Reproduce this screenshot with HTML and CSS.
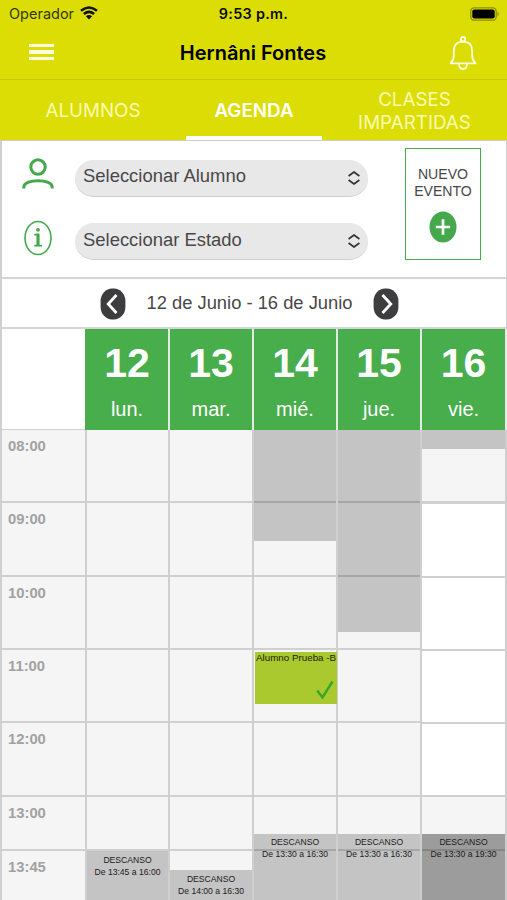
FILE: index.html
```html
<!DOCTYPE html>
<html lang="es">
<head>
<meta charset="utf-8">
<title>Agenda</title>
<link rel="stylesheet" href="styles.css">
</head>
<body>
<div class="app">
  <header class="top">
    <div class="status">
      <div class="carrier"><span class="operator">Operador</span>
        <svg class="wifi" viewBox="0 0 18 14" width="18" height="14" fill="none" stroke="#111" stroke-width="2.5"><path d="M1 4.8Q9-1.8 17 4.8M3.9 8Q9 3.8 14.1 8"/><path d="M9 13.5L5.9 10.2Q9 7.8 12.1 10.2Z" fill="#111" stroke="none"/></svg>
      </div>
      <span class="clock">9:53 p.m.</span>
      <svg class="battery" viewBox="0 0 30 14" width="30" height="14"><rect x=".8" y=".8" width="25.4" height="12.4" rx="3.5" fill="none" stroke="#8d8d05" stroke-width="1.3"/><rect x="2.3" y="2.4" width="22.4" height="9.2" rx="2" fill="#000"/><path d="M27.5 4.5Q30 7 27.5 9.5Z" fill="#8d8d05"/></svg>
    </div>
    <div class="titlebar">
      <div class="menu"><i></i><i></i><i></i></div>
      <h1>Hernâni Fontes</h1>
      <svg class="bell" viewBox="0 0 28 34" width="28" height="34" fill="none" stroke="#fffde0" stroke-width="1.8" stroke-linejoin="round"><circle cx="14" cy="3.2" r="2.2"/><path d="M1.5 27.3Q4.8 24 4.8 20V15Q4.8 5.7 14 5.7T23.2 15V20Q23.2 24 26.5 27.3Z"/><path d="M10 27.5Q10 33 14 33T18 27.5"/></svg>
    </div>
  </header>
  <nav class="tabs">
    <div class="tab">ALUMNOS</div>
    <div class="tab active">AGENDA</div>
    <div class="tab">CLASES<br>IMPARTIDAS</div>
  </nav>
  <main>
    <section class="filters">
      <div class="fields">
        <div class="field">
          <svg viewBox="0 0 32 32" width="32" height="32" fill="none" stroke="#45a94c" stroke-width="3"><circle cx="16" cy="9" r="7.2"/><path d="M1.8 30.5V29C2.5 20.5 29.5 20.5 30.2 29V30.5"/></svg>
          <div class="select"><span>Seleccionar Alumno</span><svg viewBox="0 0 12 14" width="12" height="14" fill="none" stroke="#333" stroke-width="1.7"><path d="M.6 5L6 1L11.4 5M.6 9L6 13L11.4 9"/></svg></div>
        </div>
        <div class="field">
          <svg viewBox="0 0 32 36" width="32" height="36" fill="none" stroke="#45a94c"><ellipse cx="16" cy="18" rx="13" ry="16.5" stroke-width="1.6"/><circle cx="16" cy="9.8" r="1.9" fill="#45a94c" stroke="none"/><path d="M12.3 14.6H17" stroke-width="1.8"/><path d="M16 13.7V25.3" stroke-width="3.2"/><path d="M12.2 25.7H20" stroke-width="1.7"/></svg>
          <div class="select"><span>Seleccionar Estado</span><svg viewBox="0 0 12 14" width="12" height="14" fill="none" stroke="#333" stroke-width="1.7"><path d="M.6 5L6 1L11.4 5M.6 9L6 13L11.4 9"/></svg></div>
        </div>
      </div>
      <div class="new-event">
        <span>NUEVO<br>EVENTO</span>
        <svg viewBox="0 0 28 32" width="28" height="32"><ellipse cx="14" cy="16" rx="13.5" ry="15.5" fill="#45a94c"/><path d="M6.8 16H21.2M14 8.3V23.7" stroke="#fff" stroke-width="2.7"/></svg>
      </div>
    </section>
    <section class="week">
      <svg viewBox="0 0 26 32" width="26" height="32"><rect x=".6" y=".5" width="24.8" height="31" rx="11.5" ry="12.5" fill="#3d3d3f"/><path d="M16.5 7L8.2 16L16.5 25" fill="none" stroke="#fff" stroke-width="2.8"/></svg>
      <span>12 de Junio - 16 de Junio</span>
      <svg viewBox="0 0 26 32" width="26" height="32"><rect x=".6" y=".5" width="24.8" height="31" rx="11.5" ry="12.5" fill="#3d3d3f"/><path d="M9.5 7L17.8 16L9.5 25" fill="none" stroke="#fff" stroke-width="2.8"/></svg>
    </section>
    <section class="calendar">
      <div class="corner"></div>
      <div class="day first"><b>12</b><span>lun.</span></div>
      <div class="day"><b>13</b><span>mar.</span></div>
      <div class="day"><b>14</b><span>mié.</span></div>
      <div class="day"><b>15</b><span>jue.</span></div>
      <div class="day"><b>16</b><span>vie.</span></div>

      <div class="col times"><div class="cell">08:00</div><div class="cell">09:00</div><div class="cell">10:00</div><div class="cell">11:00</div><div class="cell">12:00</div><div class="cell short">13:00</div><div class="cell">13:45</div></div>
      <div class="col"><div class="cell"></div><div class="cell"></div><div class="cell"></div><div class="cell"></div><div class="cell"></div><div class="cell short"></div><div class="cell"></div>
        <div class="block rest mon">DESCANSO<br>De 13:45 a 16:00</div></div>
      <div class="col"><div class="cell"></div><div class="cell"></div><div class="cell"></div><div class="cell"></div><div class="cell"></div><div class="cell short"></div><div class="cell"></div>
        <div class="block rest tue">DESCANSO<br>De 14:00 a 16:30</div></div>
      <div class="col"><div class="cell"></div><div class="cell"></div><div class="cell"></div><div class="cell"></div><div class="cell"></div><div class="cell short"></div><div class="cell"></div>
        <div class="block closed wed-am"></div>
        <div class="lesson"><span>Alumno Prueba -B</span><svg viewBox="0 0 18 20" width="18" height="20" fill="none" stroke="#36a62d" stroke-width="2.4"><path d="M1.2 10.5L6.5 17.5L16.5 1.5"/></svg></div>
        <div class="block rest">DESCANSO<br>De 13:30 a 16:30</div></div>
      <div class="col"><div class="cell"></div><div class="cell"></div><div class="cell"></div><div class="cell"></div><div class="cell"></div><div class="cell short"></div><div class="cell"></div>
        <div class="block closed thu-am"></div>
        <div class="block rest">DESCANSO<br>De 13:30 a 16:30</div></div>
      <div class="col friday"><div class="cell opening"></div><div class="cell free"></div><div class="cell free"></div><div class="cell free"></div><div class="cell free last"></div><div class="cell short"></div><div class="cell"></div>
        <div class="block closed fri-am"></div>
        <div class="block rest dark">DESCANSO<br>De 13:30 a 19:30</div></div>
    </section>
  </main>
</div>
</body>
</html>
```
FILE: styles.css
```css
* { box-sizing: border-box; }
body { margin: 0; background: #fff; }
svg { display: block; flex: none; }
.app { width: 507px; height: 900px; overflow: hidden; font-family: "Liberation Sans", Arial, sans-serif; color: #484848; }

.top { height: 80px; background: #dbdd05; border-bottom: 1px solid #c8ca08; font-family: Inter, sans-serif; color: #0c0c05; }
.status { height: 27px; display: grid; grid-template-columns: 1fr auto 1fr; align-items: center; padding: 0 7px 0 9px; }
.carrier { display: flex; align-items: center; gap: 6px; font-size: 14.5px; color: #35350a; }
.wifi { margin-top: -1px; }
.clock { font-size: 14.4px; font-weight: 600; letter-spacing: .3px; margin-right: 2px; }
.battery { justify-self: end; }
.titlebar { height: 52px; display: grid; grid-template-columns: 1fr auto 1fr; align-items: center; padding: 0 30px 0 29px; }
.menu { display: grid; gap: 3px; width: 25px; margin-top: -2px; }
.menu i { height: 3.4px; background: #fffde0; }
h1 { margin: -1px 0 0; font-size: 20px; line-height: 24px; font-weight: 600; color: #000; }
.bell { justify-self: end; margin-top: -1px; }

.tabs { height: 61px; display: grid; grid-template-columns: 186px 136px 185px; background: #dbdd05; border-bottom: 1px solid #cfcfc4; }
.tab { display: flex; align-items: center; justify-content: center; text-align: center; font: 18.8px/23px Inter, sans-serif; color: #fafab0; padding-top: 1px; }
.tab.active { color: #fff; font-weight: 600; border-bottom: 4px solid #fff; padding-top: 5px; }

main { border-left: 2px solid #d0d0d0; }
.filters { height: 138px; display: flex; justify-content: space-between; border-right: 1px solid #d0d0d0; border-bottom: 2px solid #d5d5d5; padding: 7px 25px 0 20px; }
.fields { display: grid; grid-template-rows: 63.5px 64px; }
.field { display: flex; align-items: center; gap: 21px; height: 60px; }
.field > svg { margin-top: -9px; }
.field + .field > svg { margin-top: -7px; }
.select { width: 293px; height: 37px; border-radius: 19px; background: #e8e8e8; border-bottom: 1px solid #cecece; display: flex; align-items: center; justify-content: space-between; padding: 0 8px; font-size: 18.45px; }
.select span { margin-top: -3px; }
.new-event { width: 76px; height: 112px; border: 1px solid #45a94c; display: flex; flex-direction: column; align-items: center; padding-top: 17px; gap: 10.5px; font-size: 14.1px; line-height: 17px; text-align: center; }
.week { height: 50px; display: flex; justify-content: center; align-items: center; gap: 20.5px; border-bottom: 2px solid #d5d5d5; padding: 2px 9px 0 0; font-size: 18.35px; border-right: 1px solid #d0d0d0; }
.week span { margin-top: -2px; }

.calendar { display: grid; grid-template-columns: 85px 83px 84px 84px 84px 85px; grid-template-rows: 101px 480px; }
.corner { border-bottom: 1px solid #d0d0d0; }
.day { background: #48ad4b; border-right: 2px solid #e3ece0; color: #fff; display: flex; flex-direction: column; align-items: center; }
.day.first { margin-left: -2px; padding-left: 1px; }
.day b { font-size: 41px; line-height: 46px; margin-top: 11px; }
.day span { font-size: 20px; line-height: 24px; margin-top: 11px; }
.col { position: relative; border-right: 2px solid #cfcfcf; }
.cell { height: 73.35px; background: #f5f5f5; border-bottom: 2px solid #d0d0d0; }
.cell.short { height: 54.7px; }
.times .cell { padding: 8px 0 0 6px; font-size: 14.8px; font-weight: bold; line-height: 17px; color: #a2a2a2; }
.cell.free { background: #fff; }
.cell.opening { height: 74.35px; border-bottom-width: 3px; }
.cell.free.last { height: 72.35px; }
.block { position: absolute; left: 0; right: 0; background: rgba(0, 0, 0, .2); }
.closed { top: 0; }
.wed-am { height: 111px; }
.thu-am { height: 202px; }
.fri-am { height: 19px; }
.rest { top: 404px; bottom: 0; padding-top: 2px; text-align: center; font-size: 8.6px; line-height: 12px; color: #1b1b1b; white-space: nowrap; }
.rest.mon { top: 421px; padding-top: 3px; }
.rest.tue { top: 440px; padding-top: 3px; }
.rest.dark { background: rgba(0, 0, 0, .36); }
.lesson { position: absolute; left: 1px; right: -1px; top: 222px; height: 52px; background: #a9c92f; font-size: 9.8px; line-height: 12px; color: #1d2208; white-space: nowrap; display: flex; flex-direction: column; justify-content: space-between; }
.lesson span { padding-left: 1px; }
.lesson svg { align-self: flex-end; margin: 0 3px 4px 0; }
```
